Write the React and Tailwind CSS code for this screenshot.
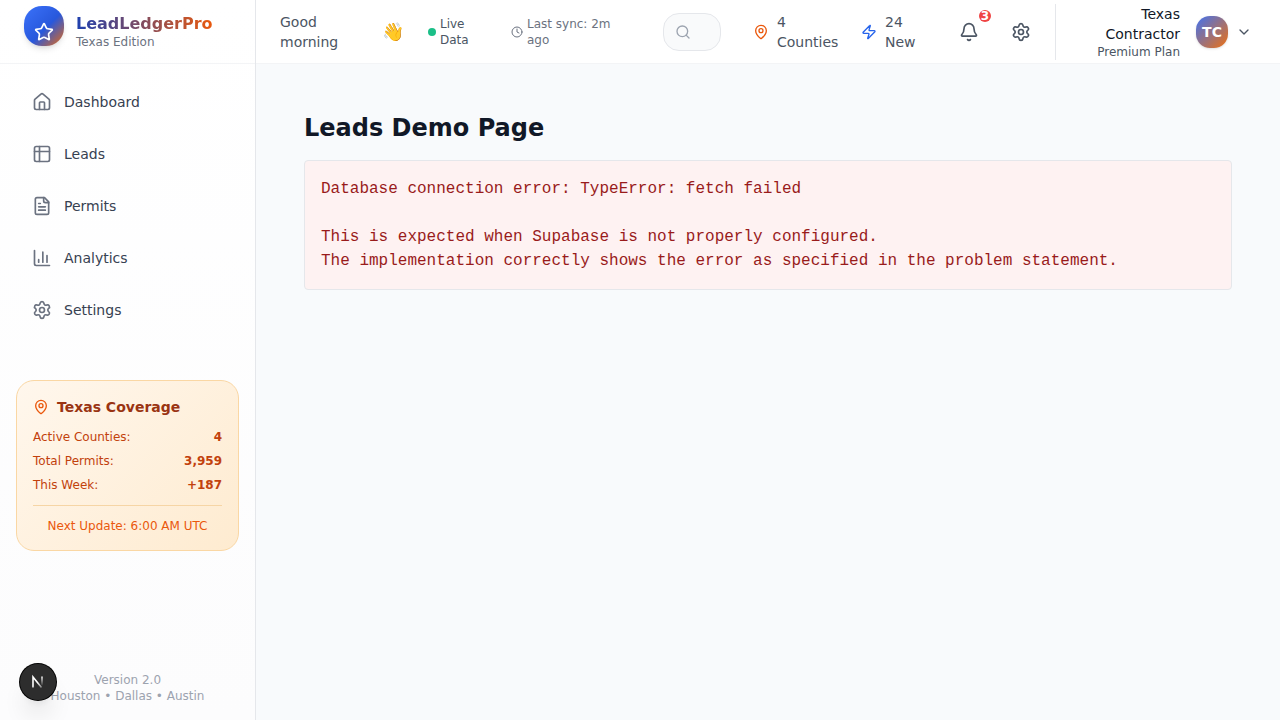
import { House, Settings, MapPin, Star, Clock, Search, Zap, Bell, ChevronDown } from "lucide-react";

const navItems = [
  { label: "Dashboard", icon: House },
  { label: "Leads", icon: LeadsIcon },
  { label: "Permits", icon: PermitsIcon },
  { label: "Analytics", icon: AnalyticsIcon },
  { label: "Settings", icon: Settings },
];

const coverage = [
  ["Active Counties:", "4"],
  ["Total Permits:", "3,959"],
  ["This Week:", "+187"],
];

function Svg({ className, children }) {
  return (
    <svg className={className} viewBox="0 0 24 24" fill="none" stroke="currentColor" strokeWidth="2" strokeLinecap="round" strokeLinejoin="round" aria-hidden="true">
      {children}
    </svg>
  );
}

function LeadsIcon({ className }) {
  return (
    <Svg className={className}>
      <rect x="3" y="3" width="18" height="18" rx="2" />
      <path d="M3 9h18M9 3v18" />
    </Svg>
  );
}

function PermitsIcon({ className }) {
  return (
    <Svg className={className}>
      <path d="M15 2H6a2 2 0 0 0-2 2v16a2 2 0 0 0 2 2h12a2 2 0 0 0 2-2V7Z" />
      <path d="M14 2v4a2 2 0 0 0 2 2h4M10 9H8M16 13H8M16 17H8" />
    </Svg>
  );
}

function AnalyticsIcon({ className }) {
  return (
    <Svg className={className}>
      <path d="M3 3v16a2 2 0 0 0 2 2h16M18 17V9M13 17V5M8 17v-3" />
    </Svg>
  );
}

function Sidebar() {
  return (
    <aside className="flex w-64 shrink-0 flex-col border-r border-[#e5e7eb] bg-linear-to-b from-white to-[#fcfcfd]">
      <div className="flex h-16 shrink-0 items-center gap-3 border-b border-[#f3f4f6] px-6 pb-3">
        <div className="flex size-10 items-end justify-center rounded-[18px] bg-linear-135/srgb from-[#3b72fa] via-[#2858dc] via-55% to-[#ea6a10] pb-1 text-white shadow-md">
          <Star className="size-5" />
        </div>
        <div className="pt-3">
          <p className="w-fit bg-linear-to-r/srgb from-[#1e40af] to-[#ea580c] bg-clip-text text-base leading-5 font-bold text-transparent">LeadLedgerPro</p>
          <p className="text-xs text-[#6b7280]">Texas Edition</p>
        </div>
      </div>
      <nav className="flex flex-col gap-2 px-4 pt-4">
        {navItems.map(({ label, icon: Icon }) => (
          <a key={label} href="#" className="flex h-11 items-center gap-3 rounded-xl px-4 text-sm text-[#374151]">
            <Icon className="size-5 text-[#6b7280]" />
            {label}
          </a>
        ))}
      </nav>
      <section className="mx-4 mt-12 rounded-[18px] border border-[#fad7a4] bg-linear-135/srgb from-[#fff7ed] to-[#feebd0] p-4">
        <h2 className="flex items-center gap-2 text-sm font-bold text-[#9a3412]">
          <MapPin className="size-4 text-[#ea580c]" />
          Texas Coverage
        </h2>
        <dl className="mt-3 flex flex-col gap-2 text-xs text-[#c2410c]">
          {coverage.map(([label, value]) => (
            <div key={label} className="flex justify-between">
              <dt>{label}</dt>
              <dd className="font-bold">{value}</dd>
            </div>
          ))}
        </dl>
        <p className="mt-3 border-t border-[#f6d5a5] pt-3 text-center text-xs text-[#ea580c]">Next Update: 6:00 AM UTC</p>
      </section>
      <footer className="mt-auto p-4 text-center text-xs text-[#9ca3af]">
        <p>Version 2.0</p>
        <p>Houston • Dallas • Austin</p>
      </footer>
    </aside>
  );
}

function Header() {
  return (
    <header className="flex h-16 shrink-0 items-center border-b border-[#f3f4f6] bg-white pr-7 pl-6 text-sm text-[#4b5563]">
      <p className="w-25 pr-6">Good morning</p>
      <span className="w-12 pl-0.5 text-lg leading-7">👋</span>
      <div className="flex w-20 items-center gap-1 text-xs">
        <span className="size-2 shrink-0 rounded-full bg-[#1bbf88]" />
        <span className="w-10">Live Data</span>
      </div>
      <div className="ml-[3px] flex w-28 items-center gap-1 text-xs text-[#6b7280]">
        <Clock className="size-3 shrink-0" />
        <span>Last sync: 2m ago</span>
      </div>
      <div className="relative ml-10 min-w-14 flex-1 text-[#9ca3af]">
        <Search className="absolute top-[11px] left-3 size-4" />
        <input type="search" aria-label="Search" className="block h-[38px] w-full rounded-2xl border border-[#e5e7eb] bg-[#f9fafb] pr-2 pl-9 outline-none" />
      </div>
      <div className="ml-8 flex w-[84px] items-center gap-2">
        <MapPin className="size-4 shrink-0 text-[#ea580c]" />
        <span>4 Counties</span>
      </div>
      <div className="ml-6 flex w-15 items-center gap-2">
        <Zap className="size-4 shrink-0 text-[#2563eb]" />
        <span>24 New</span>
      </div>
      <button type="button" aria-label="Notifications" className="relative ml-[26px] p-3">
        <Bell className="size-5" />
        <span className="absolute top-0 right-0 flex size-3 items-center justify-center rounded-full bg-[#ef4444] text-xs font-bold text-white">3</span>
      </button>
      <button type="button" aria-label="Settings" className="ml-2 p-3">
        <Settings className="size-5" />
      </button>
      <button type="button" aria-label="Account menu" className="ml-3 flex h-14 items-center border-l border-[#e5e7eb] text-right">
        <span className="w-31">
          <span className="ml-auto block w-20 text-[#111827]">Texas Contractor</span>
          <span className="block text-xs">Premium Plan</span>
        </span>
        <span className="ml-4 flex size-8 items-center justify-center rounded-[14px] bg-linear-135/srgb from-[#3f72f2] to-[#ee7010] font-bold text-white shadow-sm">TC</span>
        <ChevronDown className="ml-2 size-4" />
      </button>
    </header>
  );
}

export default function App() {
  return (
    <div className="flex min-h-screen bg-[#f8fafc] font-['DejaVu_Sans',sans-serif]">
      <Sidebar />
      <div className="flex min-w-0 flex-1 flex-col">
        <Header />
        <main className="p-12">
          <h1 className="text-2xl font-bold text-[#111827]">Leads Demo Page</h1>
          <pre className="mt-4 rounded border border-[#e5e7eb] bg-[#fef2f2] p-4 font-['Liberation_Mono',monospace] text-base whitespace-pre-wrap text-[#991b1b]">
            {"Database connection error: TypeError: fetch failed\n\nThis is expected when Supabase is not properly configured.\nThe implementation correctly shows the error as specified in the problem statement."}
          </pre>
        </main>
      </div>
      <button type="button" aria-label="Open developer tools" className="fixed bottom-5 left-5 flex size-9 items-center justify-center rounded-full bg-[#2d2d2d] shadow-xl ring-1 ring-black">
        <svg className="size-[18px]" viewBox="0 0 18 18" fill="none" strokeWidth="1.6" aria-hidden="true">
          <defs>
            <linearGradient id="fade" x1="0" y1="3" x2="0" y2="13" gradientUnits="userSpaceOnUse">
              <stop stopColor="white" />
              <stop offset="1" stopColor="white" stopOpacity="0" />
            </linearGradient>
            <linearGradient id="diagonal" x1="9" y1="9" x2="14" y2="16" gradientUnits="userSpaceOnUse">
              <stop stopColor="white" />
              <stop offset="1" stopColor="white" stopOpacity="0.2" />
            </linearGradient>
          </defs>
          <path d="M4 14.500V4L12.500 14.500" stroke="url(#diagonal)" />
          <path d="M13 3.500V12.500" stroke="url(#fade)" />
        </svg>
      </button>
    </div>
  );
}
